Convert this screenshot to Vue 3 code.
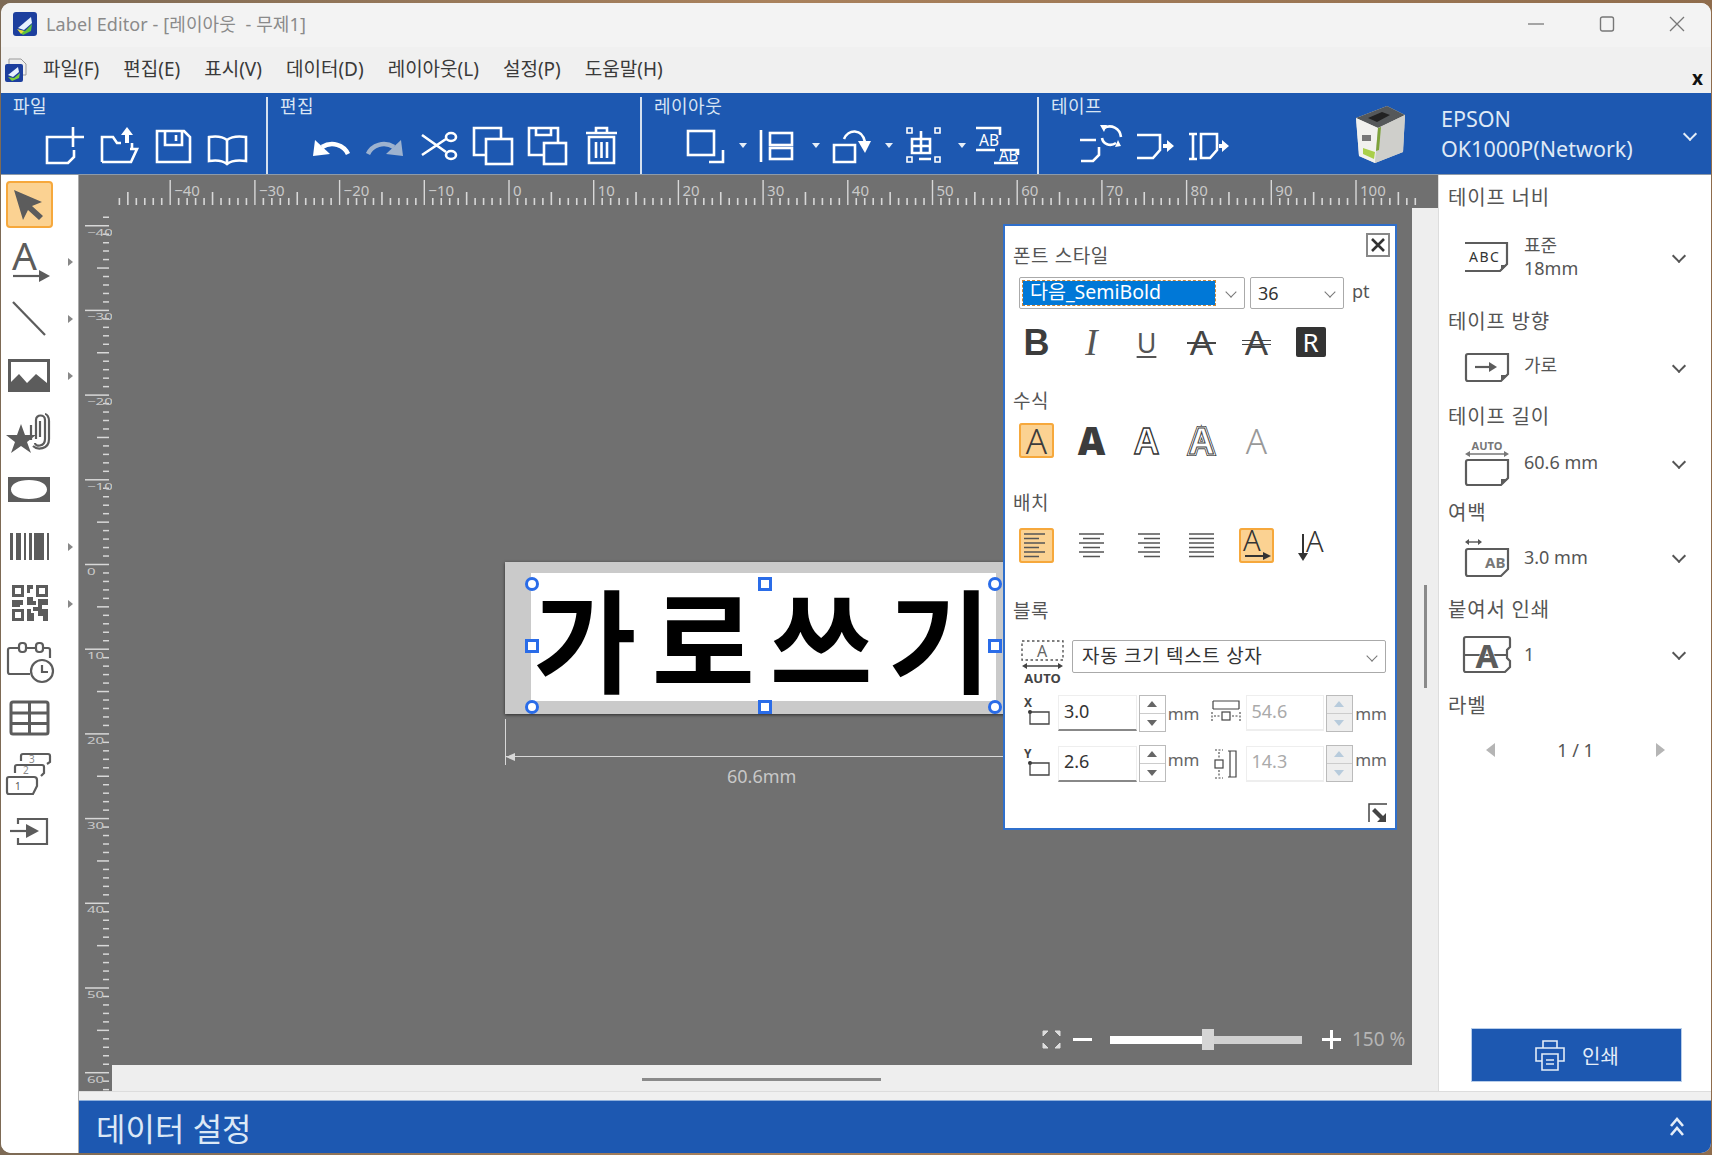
<script setup>
import { computed, ref } from 'vue';

const MM = 8.47;
const zeroX = 430;
const zeroY = 356.5;

const menus = ['파일(F)', '편집(E)', '표시(V)', '데이터(D)', '레이아웃(L)', '설정(P)', '도움말(H)'];

const hTicks = computed(() => {
  const out = [];
  for (let mm = -46; mm <= 107; mm++) {
    const kind = mm % 10 === 0 ? 'major' : mm % 5 === 0 ? 'mid' : 'minor';
    out.push({ mm, kind, x: zeroX + mm * MM, top: kind === 'major' ? 5 : kind === 'mid' ? 17 : 23 });
  }
  return out;
});

const vTicks = computed(() => {
  const out = [];
  for (let mm = -41; mm <= 62; mm++) {
    const kind = mm % 10 === 0 ? 'major' : mm % 5 === 0 ? 'mid' : 'minor';
    out.push({ mm, kind, y: zeroY + mm * MM, left: kind === 'major' ? 6 : kind === 'mid' ? 18 : 24 });
  }
  return out;
});

const handles = [
  { x: 26.5, y: 22, round: true },
  { x: 259.5, y: 22 },
  { x: 490, y: 22, round: true },
  { x: 26.5, y: 83.5 },
  { x: 490, y: 83.5 },
  { x: 26.5, y: 144.5, round: true },
  { x: 259.5, y: 144.5 },
  { x: 490, y: 144.5, round: true }
];

const zoomFill = ref(92);
</script>

<template>
  <div class="window">
    <header class="titlebar">
      <svg class="app-icon" width="26" height="26" viewBox="0 0 26 26">
        <rect x="1" y="1" width="24" height="24" rx="3" fill="#1d3f9e" />
        <path d="M6 17 L19 6 L20 12 L12 19 Z" fill="#e8f3ff" />
        <path d="M6 19 L13 20 L20 13 L19 20 L11 24 Z" fill="#5fc23a" />
        <path d="M5 18 L12 20 L9 23 Z" fill="#e9dc3b" />
      </svg>
      <span class="title-text">Label Editor - [레이아웃&nbsp; - 무제1]</span>
      <div class="win-controls">
        <svg width="18" height="16" viewBox="0 0 18 16"><path d="M1 8 H17" stroke="#8a8a8a" stroke-width="1.4" /></svg>
        <svg width="16" height="16" viewBox="0 0 16 16"><rect x="1.5" y="1" width="13" height="14" rx="2" fill="none" stroke="#777" stroke-width="1.4" /></svg>
        <svg width="16" height="16" viewBox="0 0 16 16"><path d="M1 1 L15 15 M15 1 L1 15" stroke="#777" stroke-width="1.3" /></svg>
      </div>
    </header>

    <nav class="menubar">
      <svg class="menu-icon" width="26" height="28" viewBox="0 0 26 28">
        <path d="M6 4 H18 L23 9 V20 H6 Z" fill="#eee" stroke="#9a9a9a" />
        <rect x="2" y="9" width="18" height="18" rx="2" fill="#1d3f9e" />
        <path d="M5 20 L15 12 L16 17 L10 22 Z" fill="#e8f3ff" />
        <path d="M5 22 L11 23 L17 18 L16 23 L9 26 Z" fill="#7bcf3c" />
      </svg>
      <span v-for="m in menus" :key="m" class="menu-item">{{ m }}</span>
      <span class="menu-close">x</span>
    </nav>

    <section class="toolbar">
      <div class="tool-group g1">
        <div class="group-title">파일</div>
        <div class="group-icons">
          <svg class="tb" viewBox="0 0 54 42"><path d="M30 12 H9 V38 H30 L36 32 V25 M35 2 V22 M26 12 H46" /></svg>
          <svg class="tb" viewBox="0 0 54 42"><path d="M10 37 V12 H21 L25 18 H29 M40 18 V24 M10 37 H39 L45 24 H38" /><path class="fill" d="M35 2 L41 10 H37 V18 H33 V10 H29 Z" /></svg>
          <svg class="tb" viewBox="0 0 54 42"><path d="M11 6 H38 L44 12 V37 H11 Z M19 6 V20 H36 V7 M30 10 V16" /></svg>
          <svg class="tb" viewBox="0 0 54 42"><path d="M27 15 C22 11 15 11 9 12 V36 C15 35 22 35 27 39 C32 35 39 35 46 36 V12 C39 11 32 11 27 15 Z M27 15 V39" /></svg>
        </div>
      </div>
      <div class="tool-group g2">
        <div class="group-title">편집</div>
        <div class="group-icons">
          <svg class="tb" viewBox="0 0 54 42"><path class="thick" d="M44 29 C40 20 28 16 18 22" /><path class="fill" d="M9 31 L11 15 L26 29 Z" /></svg>
          <svg class="tb dim" viewBox="0 0 54 42"><path class="thick" d="M10 29 C14 20 26 16 36 22" /><path class="fill" d="M45 31 L43 15 L28 29 Z" /></svg>
          <svg class="tb" viewBox="0 0 54 42"><path d="M10 10 L34 27 M10 30 L34 14" /><ellipse cx="39" cy="12" rx="5" ry="4" /><ellipse cx="39" cy="30" rx="5" ry="4" /></svg>
          <svg class="tb" viewBox="0 0 54 42"><path d="M19 30 H8 V3 H35 V13" /><rect x="20" y="14" width="26" height="25" /></svg>
          <svg class="tb" viewBox="0 0 54 42"><path d="M23 30 H9 V3 H38 V17 M16 3 V10 H31 V3" /><rect x="24" y="18" width="22" height="21" /></svg>
          <svg class="tb" viewBox="0 0 54 42"><path d="M12 8 H43 M22 8 V3 H33 V8 M15 12 V38 H40 V12 Z M22 17 V33 M27.5 17 V33 M33 17 V33" /></svg>
        </div>
      </div>
      <div class="tool-group g3">
        <div class="group-title">레이아웃</div>
        <div class="group-icons">
          <svg class="tb" viewBox="0 0 54 42"><rect x="10" y="6" width="26" height="24" /><path d="M45 25 V37 H31" /></svg>
          <span class="tb-arrow"></span>
          <svg class="tb" viewBox="0 0 54 42"><path d="M10 5 V37" /><rect x="19" y="8" width="22" height="12" /><rect x="19" y="23" width="22" height="11" /></svg>
          <span class="tb-arrow"></span>
          <svg class="tb" viewBox="0 0 54 42"><path d="M10 20 H31 V37 H10 Z M20 14 C24 4 38 3 41 17" /><path class="fill" d="M34 16 H47 L41 28 Z" /></svg>
          <span class="tb-arrow"></span>
          <svg class="tb" viewBox="0 0 54 42"><path class="thin" d="M10 3 H15 V8 H10 Z M38 3 H43 V8 H38 Z M10 32 H15 V37 H10 Z M38 32 H43 V37 H38 Z" /><path d="M24 6 V14 M15 14 H33 V28 H15 Z M24 14 V28 M15 21 H33 M22 34 H34" /></svg>
          <span class="tb-arrow"></span>
          <svg class="tb" viewBox="0 0 54 42"><path d="M6 3 H30 V10 M24 38 H48 M6 25 H25 M30 25 H48 V30" /><text x="9" y="21" class="tb-text" textLength="20" lengthAdjust="spacingAndGlyphs">AB</text><text x="29" y="36" class="tb-text" textLength="19" lengthAdjust="spacingAndGlyphs">AB</text></svg>
        </div>
      </div>
      <div class="tool-group g4">
        <div class="group-title">테이프</div>
        <div class="group-icons">
          <svg class="tb" viewBox="0 0 54 42"><path d="M6 15 H22 M7 36 H19 L25 30 V22 M30 3 C37 -1 46 3 47 12 M42 18 C36 22 29 19 28 13" /><path class="fill" d="M26 0 L33 0 L30 7 Z M47 21 L41 22 L44 15 Z" /></svg>
          <svg class="tb" viewBox="0 0 54 42"><path d="M9 10 H32 V25 L25 33 H9" /><path class="fill" d="M35 19 H39 V15 L46 21 L39 27 V23 H35 Z" /></svg>
          <svg class="tb" viewBox="0 0 54 42"><path d="M7 9 H15 M7 34 H15 M11 9 V34 M19 9 H35 V25 L28 33 H19 Z" /><path class="fill" d="M37 19 H40 V15 L47 21 L40 27 V23 H37 Z" /></svg>
        </div>
      </div>
      <div class="printer">
        <svg width="54" height="60" viewBox="0 0 54 60">
          <path d="M3 14 L34 2 L52 11 L50 48 L22 59 L6 52 Z" fill="#dcdcd8" />
          <path d="M3 14 L34 2 L52 11 L25 24 Z" fill="#55585a" />
          <path d="M15 14 L29 8 L37 11 L24 18 Z" fill="#222" />
          <path d="M3 14 L25 24 L22 59 L6 52 Z" fill="#f1f1ee" />
          <path d="M25 24 L52 11 L50 48 L22 59 Z" fill="#cfcfcb" />
          <path d="M25 24 L28 23 L26 46 L23 47 Z" fill="#7da23a" />
          <rect x="9" y="31" width="9" height="6" fill="#777" />
          <path d="M10 44 L22 48 L21 55 L10 50 Z" fill="#a9cf4a" />
        </svg>
        <div class="printer-name">EPSON<br />OK1000P(Network)</div>
        <span class="chev chev-white"></span>
      </div>
    </section>

    <main class="main">
      <aside class="tools">
        <div class="tool selected">
          <svg viewBox="0 0 47 47"><path class="solid" d="M8 9 L36 21 L26 25 L37 35 L33 39 L22 29 L17 39 Z" /></svg>
        </div>
        <div class="tool more">
          <svg viewBox="0 0 47 47"><text x="6" y="32" class="tool-a">A</text><path class="line" d="M7 38 H36" /><path class="solid" d="M33 32 L44 38 L33 44 Z" /></svg>
        </div>
        <div class="tool more">
          <svg viewBox="0 0 47 47"><path class="line" d="M7 7 L39 40" /></svg>
        </div>
        <div class="tool more">
          <svg viewBox="0 0 47 47"><path class="solid" fill-rule="evenodd" d="M2 7 H44 V40 H2 Z M5 10 V30 L13 22 L21 31 L30 22 L41 31 V10 Z" /></svg>
        </div>
        <div class="tool">
          <svg viewBox="0 0 47 47"><path class="solid" d="M15 15 L19 26 L30 26 L21 33 L25 44 L15 37 L5 44 L9 33 L0 26 L11 26 Z" /><path class="line" d="M25 31 V16 M30 30 V11 C30 5 39 5 39 11 V30 C39 38 29 38 29 34 M34 28 V12 M43 12 V30 C43 41 31 41 27 37 M39 5 C41 5 43 8 43 12" /></svg>
        </div>
        <div class="tool">
          <svg viewBox="0 0 47 47"><path class="solid" fill-rule="evenodd" d="M2 11 H44 V36 H2 Z M23 14 C12 14 5 18 5 23.5 C5 29 12 33 23 33 C34 33 41 29 41 23.5 C41 18 34 14 23 14 Z" /></svg>
        </div>
        <div class="tool more">
          <svg viewBox="0 0 47 47"><path class="solid" d="M4 10 H7 V37 H4 Z M10 10 H15 V37 H10 Z M18 10 H20 V37 H18 Z M23 10 H26 V37 H23 Z M28 10 H38 V37 H28 Z M41 10 H43 V37 H41 Z" /></svg>
        </div>
        <div class="tool more">
          <svg viewBox="0 0 47 47"><path class="solid" fill-rule="evenodd" d="M6 5 H18 V17 H6 Z M9 8 V14 H15 V8 Z M30 5 H42 V17 H30 Z M33 8 V14 H39 V8 Z M6 29 H18 V41 H6 Z M9 32 V38 H15 V32 Z M21 5 H27 V9 H24 V13 H21 Z M21 17 H27 V21 H30 V25 H21 Z M6 20 H17 V25 H14 V27 H6 Z M32 19 H42 V25 H36 V29 H42 V41 H37 V36 H32 V31 H27 V27 H32 Z M21 29 H25 V33 H28 V41 H21 Z" /></svg>
        </div>
        <div class="tool">
          <svg viewBox="0 0 47 47"><path class="line" d="M12 11 H4 Q2 11 2 13 V35 Q2 37 4 37 H24 M21 11 H30 M38 11 H42 Q44 11 44 13 V21" /><rect class="line" x="13" y="6" width="7" height="9" rx="3" /><rect class="line" x="30" y="6" width="7" height="9" rx="3" /><circle class="line white" cx="36" cy="34" r="11" /><path class="line" d="M36 28 V35 H42" /></svg>
        </div>
        <div class="tool">
          <svg viewBox="0 0 47 47"><rect class="line thick-line" x="5" y="8" width="37" height="32" rx="2" /><path class="line thick-line" d="M5 19 H42 M5 29.5 H42 M23.5 8 V40" /></svg>
        </div>
        <div class="tool">
          <svg viewBox="0 0 47 47"><path class="line" d="M15 10 V5 Q15 3 17 3 H42 Q44 3 44 5 V11 L41 13" /><path class="line" d="M9 22 V16 Q9 14 11 14 H36 Q38 14 38 16 V22 L35 25" /><path class="line white" d="M3 26 H28 Q31 26 31 29 V35 L27 43 H3 Q1 43 1 41 V28 Q1 26 3 26 Z" /><text x="9" y="39" class="tool-n">1</text><text x="17" y="23" class="tool-n n-light">2</text><text x="23" y="11.5" class="tool-n n-light">3</text></svg>
        </div>
        <div class="tool">
          <svg viewBox="0 0 47 47"><path class="line" d="M12 16 V11 H41 V36 H12 V30" /><path class="line" d="M4 23 H22" /><path class="solid" d="M20 16 L33 23 L20 30 Z" /></svg>
        </div>
      </aside>

      <div class="work-column">
        <div class="workspace">
          <div class="stage">
            <svg class="hruler" width="1359" height="33">
              <line v-for="t in hTicks" :key="t.mm" :x1="t.x" :x2="t.x" :y1="t.top" y2="30" stroke="#d8d8d8" :stroke-width="t.kind === 'major' ? 1.4 : 1.6" />
              <template v-for="t in hTicks" :key="'l' + t.mm">
                <text v-if="t.kind === 'major'" :x="t.x + 4" y="21" class="ruler-label">{{ t.mm < 0 ? '−' + -t.mm : t.mm }}</text>
              </template>
            </svg>
            <div class="vruler-wrap">
              <svg class="vruler" width="33" height="883">
                <line v-for="t in vTicks" :key="t.mm" :x1="t.left" x2="30" :y1="t.y" :y2="t.y" stroke="#d8d8d8" stroke-width="1.5" />
                <template v-for="t in vTicks" :key="'l' + t.mm">
                  <text v-if="t.kind === 'major'" class="ruler-label" :transform="`translate(8 ${t.y + 10}) scale(1 0.6)`">{{ t.mm < 0 ? '−' + -t.mm : t.mm }}</text>
                </template>
              </svg>
            </div>
            <div class="canvas">
              <div class="sheet">
                <div class="printable"><span class="label-text"><span class="label-spaced">가로쓰</span>기</span></div>
                <span
                  v-for="(h, i) in handles"
                  :key="i"
                  class="handle"
                  :class="{ round: h.round }"
                  :style="{ left: h.x + 'px', top: h.y + 'px' }"
                ></span>
              </div>
              <div class="dimension">
                <span class="dim-tick"></span>
                <span class="dim-head"></span>
                <span class="dim-line"></span>
                <span class="dim-text">60.6mm</span>
              </div>

              <div class="dialog">
                <button class="dlg-close">
                  <svg width="16" height="16" viewBox="0 0 16 16"><path d="M2 2 L14 14 M14 2 L2 14" stroke="#333" stroke-width="2.6" /></svg>
                </button>

                <div class="dlg-label first">폰트 스타일</div>
                <div class="font-row">
                  <div class="combo font-combo">
                    <span class="combo-selected">다음_SemiBold</span>
                    <span class="chev chev-sm"></span>
                  </div>
                  <div class="combo size-combo">
                    <span>36</span>
                    <span class="chev chev-sm"></span>
                  </div>
                  <span class="unit-pt">pt</span>
                </div>
                <div class="btn-row format-row">
                  <span class="fbtn f-b">B</span>
                  <span class="fbtn f-i">I</span>
                  <span class="fbtn f-u">U</span>
                  <span class="fbtn f-s">A</span>
                  <span class="fbtn f-s f-d">A</span>
                  <span class="fbtn"><span class="f-r">R</span></span>
                </div>

                <div class="dlg-label l-style">수식</div>
                <div class="btn-row style-row">
                  <span class="fbtn on s-plain">A</span>
                  <span class="fbtn s-bold">A</span>
                  <span class="fbtn">
                    <svg width="35" height="35" viewBox="0 0 35 35"><text x="17.5" y="31" class="a-outline">A</text></svg>
                  </span>
                  <span class="fbtn">
                    <svg width="35" height="35" viewBox="0 0 35 35">
                      <text x="17.5" y="30.5" class="a-outline a-w1">A</text>
                      <text x="17.5" y="30.5" class="a-outline a-w2">A</text>
                      <text x="17.5" y="30.5" class="a-outline a-w3">A</text>
                    </svg>
                  </span>
                  <span class="fbtn s-plain s-light">A</span>
                </div>

                <div class="dlg-label l-place">배치</div>
                <div class="btn-row align-row">
                  <span class="fbtn on">
                    <svg width="35" height="35" viewBox="0 0 35 35"><path class="al" d="M5 6 H26 M5 10.5 H20 M5 15 H26 M5 19.5 H20 M5 24 H26 M5 28.5 H20" /></svg>
                  </span>
                  <span class="fbtn">
                    <svg width="35" height="35" viewBox="0 0 35 35"><path class="al" d="M5 6 H30 M9 10.5 H26 M5 15 H30 M9 19.5 H26 M5 24 H30 M9 28.5 H26" /></svg>
                  </span>
                  <span class="fbtn">
                    <svg width="35" height="35" viewBox="0 0 35 35"><path class="al" d="M9 6 H31 M15 10.5 H31 M9 15 H31 M15 19.5 H31 M9 24 H31 M15 28.5 H31" /></svg>
                  </span>
                  <span class="fbtn">
                    <svg width="35" height="35" viewBox="0 0 35 35"><path class="al" d="M5 6 H30 M5 10.5 H30 M5 15 H30 M5 19.5 H30 M5 24 H30 M5 28.5 H30" /></svg>
                  </span>
                  <span class="fbtn on">
                    <svg width="35" height="35" viewBox="0 0 35 35"><text x="4" y="23" class="a-thin">A</text><path d="M6 28 H27" stroke="#333" stroke-width="2" /><path d="M24 24 L32 28 L24 32 Z" fill="#333" /></svg>
                  </span>
                  <span class="fbtn">
                    <svg width="35" height="35" viewBox="0 0 35 35"><text x="12" y="24" class="a-thin">A</text><path d="M9 6 V28" stroke="#333" stroke-width="2" /><path d="M4 25 H14 L9 33 Z" fill="#333" /></svg>
                  </span>
                </div>

                <div class="dlg-label l-block">블록</div>
                <div class="block-row">
                  <svg width="44" height="44" viewBox="0 0 44 44" class="auto-icon">
                    <rect x="1" y="1" width="41" height="19" fill="none" stroke="#555" stroke-dasharray="2.5 2.5" stroke-width="1.4" />
                    <text x="21" y="17" text-anchor="middle" class="auto-a">A</text>
                    <path d="M3 26 H40" stroke="#444" stroke-width="1.3" /><path d="M1 26 L6 23 V29 Z M42 26 L37 23 V29 Z" fill="#444" />
                    <text x="21.5" y="43" text-anchor="middle" class="auto-t">AUTO</text>
                  </svg>
                  <div class="combo block-combo">
                    <span class="block-text">자동 크기 텍스트 상자</span>
                    <span class="chev chev-sm"></span>
                  </div>
                </div>

                <div class="pos-row pos-x">
                  <svg width="30" height="30" viewBox="0 0 30 30" class="pos-icon">
                    <text x="0" y="9" class="pos-letter">X</text>
                    <circle cx="6" cy="14" r="2" fill="#333" /><path d="M6 14 V26 H25 V14 H6" fill="none" stroke="#444" stroke-width="1.3" />
                  </svg>
                  <div class="num"><span>3.0</span></div>
                  <div class="spin"><i class="up"></i><i class="down"></i></div>
                  <span class="mm">mm</span>
                  <svg width="30" height="30" viewBox="0 0 30 30" class="pos-icon right">
                    <path d="M2 3 H28 V11 M2 3 V11 M2 11 H28" fill="none" stroke="#444" stroke-width="1.2" /><rect x="11" y="14" width="8" height="8" fill="none" stroke="#444" stroke-width="1.2" /><path d="M3 18 H9 M21 18 H27 M1 14 V24 M29 14 V24" stroke="#444" stroke-dasharray="2 1.5" stroke-width="1.1" />
                  </svg>
                  <div class="num off"><span>54.6</span></div>
                  <div class="spin off"><i class="up"></i><i class="down"></i></div>
                  <span class="mm">mm</span>
                </div>
                <div class="pos-row pos-y">
                  <svg width="30" height="30" viewBox="0 0 30 30" class="pos-icon">
                    <text x="0" y="9" class="pos-letter">Y</text>
                    <circle cx="6" cy="14" r="2" fill="#333" /><path d="M6 14 V26 H25 V14 H6" fill="none" stroke="#444" stroke-width="1.3" />
                  </svg>
                  <div class="num"><span>2.6</span></div>
                  <div class="spin"><i class="up"></i><i class="down"></i></div>
                  <span class="mm">mm</span>
                  <svg width="30" height="30" viewBox="0 0 30 30" class="pos-icon right">
                    <path d="M17 2 H25 V28 H17 M19 2 V28" fill="none" stroke="#444" stroke-width="1.2" /><rect x="4" y="11" width="8" height="8" fill="none" stroke="#444" stroke-width="1.2" /><path d="M8 3 V9 M8 21 V27 M4 1 H12 M4 29 H12" stroke="#444" stroke-dasharray="2 1.5" stroke-width="1.1" />
                  </svg>
                  <div class="num off"><span>14.3</span></div>
                  <div class="spin off"><i class="up"></i><i class="down"></i></div>
                  <span class="mm">mm</span>
                </div>

                <svg class="dlg-expand" width="20" height="20" viewBox="0 0 20 20">
                  <path d="M19 1 H1 V19" fill="none" stroke="#444" stroke-width="1.5" />
                  <path d="M7 5 L15 13 L18 10 V19 H9 L12 16 L4 8 Z" fill="#444" />
                </svg>
              </div>

              <div class="zoom-bar">
                <svg width="19" height="19" viewBox="0 0 19 19">
                  <path d="M1 6 V1 H6 L1 6 Z M18 6 V1 H13 Z M1 13 V18 H6 Z M18 13 V18 H13 Z" fill="#ddd" stroke="#ddd" />
                </svg>
                <span class="z-minus"></span>
                <div class="z-track">
                  <span class="z-fill" :style="{ width: zoomFill + 'px' }"></span>
                  <span class="z-thumb"></span>
                </div>
                <span class="z-plus"></span>
                <span class="z-value">150 %</span>
              </div>
            </div>
            <div class="vscroll"><span class="vthumb"></span></div>
            <div class="hscroll"><span class="hthumb"></span></div>
          </div>

          <aside class="panel">
            <div class="p-label">테이프 너비</div>
            <div class="p-row r1">
              <svg class="p-icon" width="48" height="46" viewBox="0 0 48 46">
                <path d="M1 9 H43 V30 L36 37 H1" class="p-line" /><path d="M37 37 V31 H43 Z" fill="#5c5c5c" />
                <text x="5" y="28" class="p-abc">ABC</text>
              </svg>
              <div class="p-value">표준<br />18mm</div>
              <span class="chev"></span>
            </div>

            <div class="p-label">테이프 방향</div>
            <div class="p-row r2">
              <svg class="p-icon" width="48" height="46" viewBox="0 0 48 46">
                <path d="M4 10 H44 V30 L37 37 H4 Q2 37 2 35 V12 Q2 10 4 10 Z" class="p-line" /><path d="M37 37 V31 H44 Z" fill="#5c5c5c" />
                <path d="M11 23 H27" class="p-line" /><path d="M25 18 L33 23 L25 28 Z" fill="#5c5c5c" />
              </svg>
              <div class="p-value up2">가로</div>
              <span class="chev"></span>
            </div>

            <div class="p-label">테이프 길이</div>
            <div class="p-row r3">
              <svg class="p-icon" width="48" height="46" viewBox="0 0 48 46">
                <text x="23" y="10" text-anchor="middle" class="p-auto">AUTO</text>
                <path d="M3 14 H43" stroke="#777" stroke-width="1.4" /><path d="M1 14 L6 11 V17 Z M45 14 L40 11 V17 Z" fill="#777" />
                <path d="M4 20 H44 V38 L37 45 H4 Q2 45 2 43 V22 Q2 20 4 20 Z" class="p-line" /><path d="M37 45 V39 H44 Z" fill="#5c5c5c" />
              </svg>
              <div class="p-value">60.6 mm</div>
              <span class="chev"></span>
            </div>

            <div class="p-label">여백</div>
            <div class="p-row r4">
              <svg class="p-icon" width="48" height="46" viewBox="0 0 48 46">
                <path d="M3 8 H16" stroke="#555" stroke-width="1.4" /><path d="M1 8 L5 5 V11 Z M18 8 L14 5 V11 Z" fill="#555" />
                <path d="M4 15 H44 V35 L37 42 H4 Q2 42 2 40 V17 Q2 15 4 15 Z" class="p-line" />
                <text x="21" y="34" class="p-ab">AB</text>
              </svg>
              <div class="p-value">3.0 mm</div>
              <span class="chev"></span>
            </div>

            <div class="p-label">붙여서 인쇄</div>
            <div class="p-row r5">
              <svg class="p-icon" width="48" height="46" viewBox="0 0 48 46">
                <path d="M0 8 Q0 6 2 6 H44 Q46 6 46 8 V16 L43 19 V27 L46 30 V36 L41 41 H2 Q0 41 0 39 Z M0 24 H43" class="p-line" />
                <text x="23" y="37" text-anchor="middle" class="p-big-a">A</text>
              </svg>
              <div class="p-value">1</div>
              <span class="chev"></span>
            </div>

            <div class="p-label">라벨</div>
            <div class="p-pager">
              <span class="tri tri-left"></span>
              <span class="page-no">1 / 1</span>
              <span class="tri tri-right"></span>
            </div>

            <button class="print-btn">
              <svg width="32" height="32" viewBox="0 0 32 32">
                <path d="M9 9 V2 H23 V9 M8 22 H2 V9 H30 V22 H24" fill="none" stroke="#e4edf8" stroke-width="1.6" />
                <path d="M8 15 H24 V31 H8 Z M12 21 H20 M12 25 H20" fill="none" stroke="#e4edf8" stroke-width="1.6" />
              </svg>
              <span>인쇄</span>
            </button>
          </aside>
        </div>

        <div class="strip"></div>
        <footer class="databar">
          <span>데이터 설정</span>
          <svg width="16" height="22" viewBox="0 0 16 22"><path d="M2 10 L8 3 L14 10 M2 19 L8 12 L14 19" fill="none" stroke="#e4edf8" stroke-width="2.6" /></svg>
        </footer>
      </div>
    </main>
  </div>
</template>

<style>
html,
body {
  margin: 0;
  background: linear-gradient(90deg, #7d6a55, #a9815c 45%, #8f6c4c);
}
</style>

<style scoped>
.window {
  box-sizing: border-box;
  width: 1710px;
  height: 1150px;
  margin: 3px 1px 2px;
  display: flex;
  flex-direction: column;
  overflow: hidden;
  border-radius: 10px;
  background: #fff;
  font-family: 'Noto Sans', 'Noto Sans CJK KR', sans-serif;
  color: #555;
}

.titlebar {
  height: 44px;
  flex: none;
  display: flex;
  align-items: center;
  background: #f3f3f3;
}

.app-icon {
  margin-left: 11px;
  margin-top: -3px;
}

.title-text {
  margin-left: 8px;
  margin-top: -4px;
  font-size: 18px;
  letter-spacing: 0.1px;
  color: #8a8a8a;
}

.win-controls {
  margin-left: auto;
  margin-right: 26px;
  margin-top: -2px;
  display: flex;
  gap: 54px;
}

.menubar {
  height: 46px;
  flex: none;
  display: flex;
  align-items: center;
  gap: 24px;
  background: #f0f0f0;
  position: relative;
}

.menu-icon {
  position: absolute;
  left: 2px;
  top: 8px;
}

.menu-item {
  margin-top: -4px;
  font-size: 19px;
  color: #3a3a3a;
}

.menu-item:first-of-type {
  margin-left: 42px;
}

.menu-close {
  margin-left: auto;
  margin-right: 8px;
  margin-top: 16px;
  font-size: 19px;
  font-weight: 700;
  color: #111;
}

.toolbar {
  height: 82px;
  box-sizing: border-box;
  flex: none;
  display: flex;
  background: #1d58b1;
  border-bottom: 1px solid #8d9aa9;
}

.tool-group {
  box-sizing: border-box;
  height: 77px;
  margin-top: 4px;
  border-right: 2px solid #d5e0ef;
}

.tool-group.g1 {
  width: 267px;
}

.tool-group.g2 {
  width: 374px;
}

.tool-group.g3 {
  width: 397px;
}

.tool-group.g4 {
  width: 316px;
  border-right: none;
}

.group-title {
  height: 20px;
  line-height: 18px;
  padding-left: 12px;
  font-size: 18px;
  letter-spacing: 0.5px;
  color: #d9e5f4;
}

.group-icons {
  display: flex;
  align-items: flex-start;
  margin-top: 8px;
  padding-left: 36px;
}

.g1 .group-icons {
  padding-left: 37px;
}

.g3 .group-icons {
  padding-left: 36px;
}

.g4 .group-icons {
  padding-left: 35px;
}

.tb {
  width: 54px;
  height: 42px;
  flex: none;
  overflow: visible;
}

.tb path,
.tb rect,
.tb ellipse {
  fill: none;
  stroke: #fff;
  stroke-width: 2.6;
}

.tb path.thick {
  stroke-width: 4.5;
}

.tb path.thin {
  stroke-width: 1.6;
}

.tb path.fill {
  fill: #fff;
  stroke: none;
}

.tb.dim path.thick {
  stroke: #9db2cf;
}

.tb.dim path.fill {
  fill: #9db2cf;
}

.tb-text {
  font-size: 16px;
  fill: #fff;
  font-family: 'Noto Sans', sans-serif;
}

.tb-arrow {
  width: 19px;
  height: 42px;
  flex: none;
  position: relative;
}

.tb-arrow::after {
  content: '';
  position: absolute;
  left: 7px;
  top: 18px;
  border-left: 4px solid transparent;
  border-right: 4px solid transparent;
  border-top: 5px solid #e6eef8;
}

.printer {
  display: flex;
  align-items: center;
  flex: 1;
  height: 80px;
  margin-top: 1px;
  position: relative;
}

.printer svg {
  margin-left: -2px;
}

.printer-name {
  margin-left: 34px;
  font-size: 21.5px;
  line-height: 30px;
  color: #dfe9f6;
}

.chev {
  width: 10px;
  height: 10px;
  flex: none;
  box-sizing: border-box;
  margin-left: auto;
  border-right: 2px solid #555;
  border-bottom: 2px solid #555;
  transform: translateY(-1px) rotate(45deg);
}

.chev-white {
  position: absolute;
  right: 16px;
  top: 36px;
  border-color: #e4edf8;
}

.chev-sm {
  width: 8px;
  height: 8px;
  border-width: 1.4px;
  border-color: #777;
}

.main {
  flex: 1;
  min-height: 0;
  display: flex;
}

.tools {
  width: 78px;
  flex: none;
  box-sizing: border-box;
  padding: 6px 0 0 5px;
  display: flex;
  flex-direction: column;
  gap: 10px;
  background: #fff;
  border-right: 1px solid #aaa;
}

.tool {
  width: 47px;
  height: 47px;
  box-sizing: border-box;
  position: relative;
  flex: none;
}

.tool svg {
  width: 47px;
  height: 47px;
  overflow: visible;
  display: block;
}

.tool.selected {
  background: #fbd292;
  border: 2px solid #f6a83c;
  border-radius: 4px;
}

.tool.selected svg {
  margin: -2px;
}

.tool.more::after {
  content: '';
  position: absolute;
  left: 62px;
  top: 20px;
  border-top: 4px solid transparent;
  border-bottom: 4px solid transparent;
  border-left: 5px solid #888;
}

.solid {
  fill: #5c5c5c;
}

.line {
  fill: none;
  stroke: #5c5c5c;
  stroke-width: 2.2;
}

.thick-line {
  stroke-width: 3;
}

.line.white {
  fill: #fff;
}

.tool-a {
  font-family: 'Noto Sans', sans-serif;
  font-size: 39px;
  fill: #5c5c5c;
}

.tool-n {
  font-family: 'Noto Sans', sans-serif;
  font-size: 10px;
  fill: #555;
}

.n-light {
  fill: #888;
}

.work-column {
  flex: 1;
  min-width: 0;
  display: flex;
  flex-direction: column;
}

.workspace {
  height: 916px;
  flex: none;
  display: flex;
}

.stage {
  width: 1359px;
  flex: none;
  display: grid;
  grid-template-columns: 33px 1300px 26px;
  grid-template-rows: 33px 857px 26px;
  background: #707070;
}

.hruler {
  grid-column: 1 / 4;
  grid-row: 1;
  width: 1359px;
}

.ruler-label {
  font-size: 15px;
  fill: #c9c9c9;
  font-family: 'Noto Sans', sans-serif;
}

.vruler-wrap {
  grid-column: 1;
  grid-row: 2 / 4;
  overflow: hidden;
  background: #707070;
}

.vruler {
  display: block;
}

.canvas {
  grid-column: 2;
  grid-row: 2;
  position: relative;
  overflow: hidden;
  background: #707070;
}

.sheet {
  position: absolute;
  left: 393px;
  top: 354px;
  width: 513px;
  height: 152px;
  background: #cacaca;
  box-shadow: 0 1px 3px rgba(0, 0, 0, 0.6);
}

.printable {
  position: absolute;
  left: 25.6px;
  top: 11px;
  width: 465px;
  height: 127.7px;
  background: #fff;
  display: flex;
  align-items: center;
}

.label-text {
  margin-left: 3px;
  font-family: 'Noto Sans CJK KR', sans-serif;
  font-weight: 700;
  font-size: 112px;
  line-height: 127px;
  color: #000;
  white-space: nowrap;
}

.label-spaced {
  letter-spacing: 15px;
}

.handle {
  position: absolute;
  width: 14px;
  height: 14px;
  box-sizing: border-box;
  margin: -7px 0 0 -7px;
  border: 3.5px solid #2a6ce8;
  background: #fff;
}

.handle.round {
  border-radius: 50%;
}

.dimension {
  position: absolute;
  left: 393px;
  top: 511px;
  width: 513px;
  height: 70px;
}

.dim-tick {
  position: absolute;
  left: 0;
  top: 0;
  width: 1px;
  height: 46px;
  background: #d8d8d8;
}

.dim-line {
  position: absolute;
  left: 1px;
  right: 0;
  top: 37px;
  height: 1px;
  background: #d8d8d8;
}

.dim-head {
  position: absolute;
  left: 1px;
  top: 34px;
  border-top: 4px solid transparent;
  border-bottom: 4px solid transparent;
  border-right: 9px solid #d8d8d8;
}

.dim-text {
  position: absolute;
  left: 222px;
  top: 45px;
  font-size: 18px;
  line-height: 24px;
  color: #c8c8c8;
}

.dialog {
  position: absolute;
  left: 891px;
  top: 16px;
  width: 394px;
  height: 606px;
  box-sizing: border-box;
  padding: 17px 8px 0 14px;
  border: 2px solid #2f6fcb;
  background: #fff;
  z-index: 2;
  color: #555;
}

.dlg-close {
  position: absolute;
  left: 361px;
  top: 7px;
  width: 24px;
  height: 24px;
  padding: 0;
  display: flex;
  align-items: center;
  justify-content: center;
  background: #fff;
  border: 2px solid #888;
}

.dlg-label {
  height: 24px;
  line-height: 24px;
  margin-left: -6px;
  font-size: 19px;
  letter-spacing: 0.6px;
  color: #555;
}

.dlg-label.first {
  transform: translateY(1px);
}

.l-style {
  margin-top: 27px;
  margin-bottom: 1px;
}

.l-place {
  margin-top: 33px;
  margin-bottom: -1px;
}

.l-block {
  margin-top: 36px;
}

.font-row {
  display: flex;
  align-items: center;
  margin-top: 10px;
  height: 32px;
}

.combo {
  box-sizing: border-box;
  height: 32px;
  display: flex;
  align-items: center;
  border: 1.5px solid #aaa;
  border-radius: 2px;
  font-size: 18px;
  color: #333;
  padding-right: 9px;
}

.font-combo {
  width: 226px;
  padding-left: 3px;
}

.combo-selected {
  box-sizing: border-box;
  width: 192px;
  height: 24px;
  line-height: 22px;
  padding-left: 7px;
  background: #0078d7;
  color: #fff;
  outline: 1px dashed #c9873a;
  font-size: 19.5px;
}

.size-combo {
  width: 94px;
  margin-left: 5px;
  padding-left: 7px;
}

.unit-pt {
  margin-left: 8px;
  margin-top: -4px;
  font-size: 18px;
  color: #555;
}

.btn-row {
  display: flex;
  gap: 20px;
  height: 35px;
}

.format-row {
  margin-top: 13px;
  height: 40px;
  align-items: center;
}

.style-row {
  margin-top: 10px;
}

.align-row {
  margin-top: 14px;
}

.fbtn {
  width: 35px;
  height: 35px;
  flex: none;
  box-sizing: border-box;
  display: flex;
  align-items: center;
  justify-content: center;
  border-radius: 3px;
  color: #3c3c3c;
  line-height: 35px;
}

.fbtn svg {
  flex: none;
  overflow: visible;
}

.fbtn.on {
  background: #fbd292;
  box-shadow: inset 0 0 0 2px #f6a83c;
}

.f-b {
  font-family: 'Liberation Sans', sans-serif;
  font-weight: 700;
  font-size: 36px;
}

.f-i {
  font-family: 'Liberation Serif', serif;
  font-style: italic;
  font-size: 37px;
  color: #555;
}

.f-u {
  font-family: 'Noto Sans', sans-serif;
  font-size: 27px;
  text-decoration: underline;
  text-underline-offset: 3px;
  text-decoration-thickness: 1.5px;
  color: #555;
}

.f-s {
  font-family: 'Liberation Sans', sans-serif;
  font-size: 35px;
  color: #444;
  position: relative;
}

.f-s::after {
  content: '';
  position: absolute;
  left: 3px;
  right: 3px;
  top: 17px;
  height: 2px;
  background: #444;
}

.f-d::after {
  top: 15px;
  height: 3px;
  background: none;
  border-top: 1.5px solid #444;
  border-bottom: 1.5px solid #444;
}

.f-r {
  width: 30px;
  height: 30px;
  margin-right: 2px;
  display: flex;
  align-items: center;
  justify-content: center;
  background: #333;
  color: #fff;
  border-radius: 2px;
  font-family: 'Noto Sans', sans-serif;
  font-size: 26px;
  font-weight: 400;
}

.s-plain {
  font-family: 'Noto Sans', sans-serif;
  font-size: 35px;
  font-weight: 300;
}

.s-bold {
  font-family: 'Noto Sans', sans-serif;
  font-size: 38px;
  font-weight: 900;
}

.s-light {
  color: #999;
}

.a-outline {
  font-family: 'Liberation Sans', sans-serif;
  font-weight: 700;
  font-size: 36px;
  text-anchor: middle;
  fill: #fff;
  stroke: #333;
  stroke-width: 1.3;
}

.a-w1 {
  stroke: #333;
  stroke-width: 4.2;
}

.a-w2 {
  stroke: #fff;
  stroke-width: 2.6;
}

.a-w3 {
  stroke: #444;
  stroke-width: 1;
}

.al {
  stroke: #555;
  stroke-width: 1.7;
  fill: none;
}

.a-thin {
  font-family: 'Noto Sans', sans-serif;
  font-size: 29px;
  font-weight: 300;
  fill: #333;
}

.block-row {
  display: flex;
  align-items: flex-start;
  margin-top: 17px;
  height: 43px;
}

.auto-icon {
  margin-left: 2px;
  flex: none;
}

.auto-a {
  font-size: 16px;
  fill: #666;
  font-family: 'Noto Sans', sans-serif;
}

.auto-t {
  font-size: 13px;
  font-weight: 700;
  fill: #444;
  font-family: 'Noto Sans', sans-serif;
}

.block-combo {
  width: 314px;
  height: 33px;
  margin-left: 7px;
  padding-left: 9px;
}

.block-text {
  margin-top: -3px;
  font-size: 19px;
  letter-spacing: 0.7px;
}

.pos-row {
  display: flex;
  align-items: center;
}

.pos-x {
  margin-top: 12px;
  height: 36px;
}

.pos-y {
  margin-top: 14px;
  height: 37px;
}

.pos-y .mm {
  margin-top: -8px;
}

.pos-icon {
  flex: none;
  margin-left: 5px;
  margin-right: 4px;
  overflow: visible;
}

.pos-icon.right {
  margin-left: 11px;
  margin-right: 5px;
}

.pos-letter {
  font-size: 12px;
  font-weight: 700;
  fill: #444;
  font-family: 'Noto Sans', sans-serif;
}

.num {
  box-sizing: border-box;
  width: 81px;
  height: 36px;
  display: flex;
  align-items: center;
  padding: 0 0 4px 5px;
  border: 1px solid #eee;
  border-bottom: 2px solid #888;
  font-size: 18px;
  color: #333;
}

.num.off {
  border-bottom-color: #eee;
  color: #aaa;
}

.spin {
  box-sizing: border-box;
  width: 28px;
  height: 37px;
  margin-left: 2px;
  display: flex;
  flex-direction: column;
  border: 1.5px solid #bbb;
}

.spin i {
  flex: 1;
  position: relative;
}

.spin i.up {
  border-bottom: 1px solid #ccc;
}

.spin i::after {
  content: '';
  position: absolute;
  left: 7px;
  border-left: 5px solid transparent;
  border-right: 5px solid transparent;
}

.spin i.up::after {
  top: 5px;
  border-bottom: 6px solid #666;
}

.spin i.down::after {
  top: 6px;
  border-top: 6px solid #666;
}

.spin.off {
  background: #eee;
}

.spin.off i.up::after {
  border-bottom-color: #b7cbdc;
}

.spin.off i.down::after {
  border-top-color: #b7cbdc;
}

.mm {
  margin-left: 2px;
  font-size: 17px;
  color: #666;
}

.dlg-expand {
  position: absolute;
  left: 363px;
  top: 577px;
}

.zoom-bar {
  position: absolute;
  left: 930px;
  top: 821px;
  height: 21px;
  display: flex;
  align-items: center;
  z-index: 1;
}

.z-minus {
  width: 19px;
  height: 3px;
  margin-left: 12px;
  background: #fff;
}

.z-track {
  width: 192px;
  height: 8px;
  margin-left: 18px;
  background: #d0d0d0;
  position: relative;
  flex: none;
}

.z-fill {
  display: block;
  height: 8px;
  background: #fff;
}

.z-thumb {
  position: absolute;
  left: 92px;
  top: -7px;
  width: 12px;
  height: 21px;
  background: #d5d5d5;
}

.z-plus {
  width: 19px;
  height: 19px;
  margin-left: 20px;
  background: linear-gradient(#fff, #fff) center / 19px 3px no-repeat,
    linear-gradient(#fff, #fff) center / 3px 19px no-repeat;
}

.z-value {
  margin-left: 11px;
  margin-top: -2px;
  font-size: 19px;
  color: #b5b5b5;
  white-space: nowrap;
}

.vscroll {
  grid-column: 3;
  grid-row: 2;
  background: #eee;
  position: relative;
}

.vthumb {
  position: absolute;
  left: 12px;
  top: 377px;
  width: 3px;
  height: 103px;
  background: #8a8a8a;
}

.hscroll {
  grid-column: 2 / 4;
  grid-row: 3;
  background: #eee;
  position: relative;
}

.hthumb {
  position: absolute;
  left: 530px;
  top: 13px;
  width: 239px;
  height: 3px;
  background: #8a8a8a;
}

.panel {
  flex: 1;
  min-width: 0;
  padding-top: 11px;
  display: flex;
  flex-direction: column;
  background: #fff;
  border-left: 1px solid #ddd;
  box-sizing: border-box;
}

.p-label {
  height: 24px;
  line-height: 24px;
  flex: none;
  padding-left: 9px;
  font-size: 20px;
  letter-spacing: 0.8px;
  color: #555;
}

.p-row {
  display: flex;
  align-items: center;
  flex: none;
  padding-left: 25px;
  padding-right: 27px;
}

.r1 {
  height: 94px;
  margin-bottom: 6px;
}

.r2 {
  height: 66px;
  margin-bottom: 5px;
}

.r3 {
  height: 67px;
  margin-bottom: 5px;
}

.r4 {
  height: 64px;
  margin-bottom: 9px;
}

.r5 {
  height: 64px;
  margin-bottom: 8px;
}

.p-icon {
  flex: none;
  overflow: visible;
}

.p-value {
  margin-left: 12px;
  font-size: 18px;
  line-height: 23px;
  color: #555;
}

.p-value.up2 {
  margin-top: -4px;
}

.p-line {
  fill: none;
  stroke: #5c5c5c;
  stroke-width: 2.2;
}

.p-abc {
  font-size: 14px;
  letter-spacing: 1.5px;
  fill: #333;
  font-family: 'Noto Sans', sans-serif;
}

.p-auto {
  font-size: 11px;
  font-weight: 700;
  fill: #777;
  font-family: 'Noto Sans', sans-serif;
}

.p-ab {
  font-size: 15px;
  font-weight: 700;
  fill: #777;
  font-family: 'Noto Sans', sans-serif;
}

.p-big-a {
  font-size: 33px;
  font-weight: 700;
  fill: #5c5c5c;
  stroke: #fff;
  stroke-width: 1;
  paint-order: stroke;
  font-family: 'Noto Sans', sans-serif;
}

.p-pager {
  height: 64px;
  flex: none;
  display: flex;
  align-items: center;
  padding-left: 47px;
}

.tri {
  width: 0;
  height: 0;
  border-top: 7px solid transparent;
  border-bottom: 7px solid transparent;
}

.tri-left {
  border-right: 9px solid #b5b5b5;
}

.tri-right {
  border-left: 9px solid #b5b5b5;
}

.page-no {
  width: 161px;
  text-align: center;
  font-size: 18px;
  color: #555;
}

.print-btn {
  margin: auto 0 9px 32px;
  width: 211px;
  height: 54px;
  flex: none;
  display: flex;
  align-items: center;
  justify-content: center;
  gap: 16px;
  padding: 0;
  background: #1d58b1;
  border: 1px solid #b7cdea;
  color: #e4edf8;
  font-family: inherit;
  font-size: 20px;
}

.strip {
  height: 8px;
  flex: none;
  background: #f0f0f0;
  border-top: 1px solid #ddd;
}

.databar {
  flex: 1;
  min-height: 0;
  display: flex;
  align-items: center;
  justify-content: space-between;
  padding: 0 26px 0 17px;
  background: #1d58b1;
  border-top: 1px solid #8fb0dc;
  color: #dce8f6;
  font-size: 32px;
}
</style>
